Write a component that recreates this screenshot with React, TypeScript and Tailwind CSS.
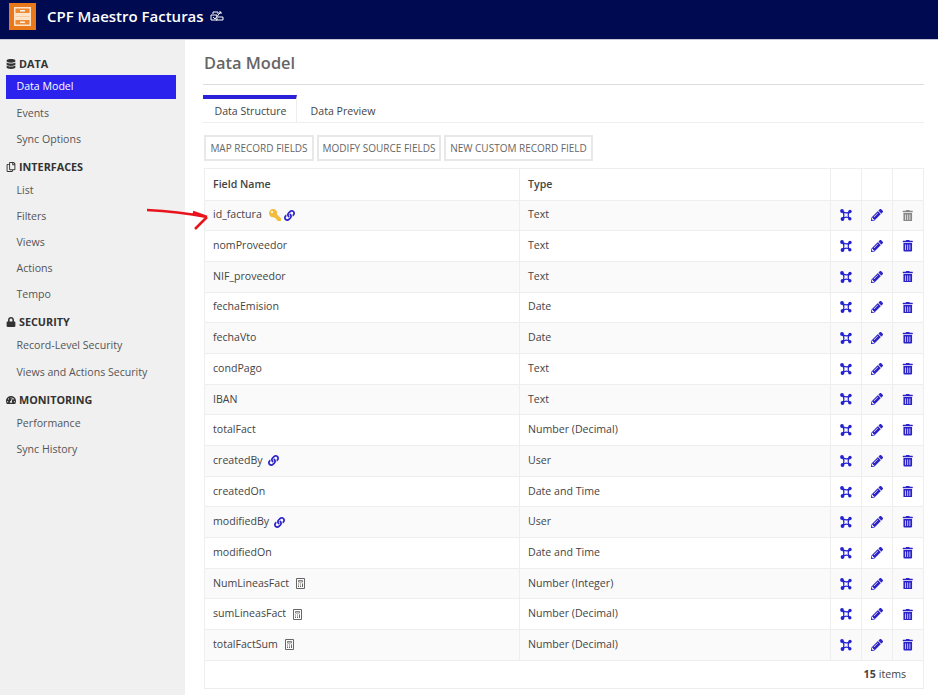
import { FaDatabase, FaKey, FaLink, FaLock, FaPencilAlt, FaRegCopy, FaTachometerAlt, FaTrashAlt } from 'react-icons/fa';

interface Campo {
  nombre: string;
  tipo: string;
  extra?: 'key' | 'link' | 'calc';
}

const campos: Campo[] = [
  { nombre: 'id_factura', tipo: 'Text', extra: 'key' },
  { nombre: 'nomProveedor', tipo: 'Text' },
  { nombre: 'NIF_proveedor', tipo: 'Text' },
  { nombre: 'fechaEmision', tipo: 'Date' },
  { nombre: 'fechaVto', tipo: 'Date' },
  { nombre: 'condPago', tipo: 'Text' },
  { nombre: 'IBAN', tipo: 'Text' },
  { nombre: 'totalFact', tipo: 'Number (Decimal)' },
  { nombre: 'createdBy', tipo: 'User', extra: 'link' },
  { nombre: 'createdOn', tipo: 'Date and Time' },
  { nombre: 'modifiedBy', tipo: 'User', extra: 'link' },
  { nombre: 'modifiedOn', tipo: 'Date and Time' },
  { nombre: 'NumLineasFact', tipo: 'Number (Integer)', extra: 'calc' },
  { nombre: 'sumLineasFact', tipo: 'Number (Decimal)', extra: 'calc' },
  { nombre: 'totalFactSum', tipo: 'Number (Decimal)', extra: 'calc' },
];

function NetworkIcon() {
  return (
    <svg width="12" height="12" viewBox="0 0 12 12" className="text-[#2322d0]">
      <path d="M2 2Q6 5.500 10 2.500Q6.500 6 9.800 9.800Q6 6.500 2.500 10Q5.500 6 2 2Z" stroke="currentColor" strokeWidth="1.200" fill="none" />
      <circle cx="2" cy="2" r="1.900" fill="currentColor" />
      <circle cx="10" cy="2.500" r="1.700" fill="currentColor" />
      <circle cx="2.500" cy="10" r="1.900" fill="currentColor" />
      <circle cx="9.800" cy="9.800" r="1.700" fill="currentColor" />
    </svg>
  );
}

function CalcIcon() {
  return (
    <svg width="9" height="11" viewBox="0 0 9 11" className="text-[#666]">
      <path d="M0.500 0.500H8.500V10.500H0.500Z" stroke="currentColor" fill="none" />
      <path d="M2.500 2.500H6.500V4H2.500Z" stroke="currentColor" strokeWidth="0.800" fill="none" />
      <path d="M2 5.500H3V6.500H2ZM4 5.500H5V6.500H4ZM6 5.500H7V9H6ZM2 7.500H3V9H2ZM4 7.500H5V9H4Z" fill="currentColor" />
    </svg>
  );
}

function SidebarTitle({ icon, children }: { icon: React.ReactNode; children: React.ReactNode }) {
  return (
    <div className="flex items-center gap-[3px] pl-[6px] text-[10.8px] font-bold leading-[16px] text-[#333]">
      <span className="flex w-[10px] justify-center text-[10px]">{icon}</span>
      {children}
    </div>
  );
}

function SidebarItem({ children, active, className }: { children: React.ReactNode; active?: boolean; className?: string }) {
  return (
    <div
      className={
        (active ? 'bg-[#2b22ee] text-white ' : 'text-[#555] ') +
        'mx-[6px] flex h-[24px] w-[170px] items-center pl-[10.5px] text-[10.6px] ' +
        (className || '')
      }
    >
      {children}
    </div>
  );
}

function ActionButton({ children, className }: { children: React.ReactNode; className: string }) {
  return <button className={'h-[26px] border-2 border-[#e8e8e8] text-[10px] font-medium text-[#666] ' + className}>{children}</button>;
}

export default function App() {
  return (
    <div className="flex h-[695px] flex-col overflow-hidden bg-white font-['Open_Sans',sans-serif]">
      <header className="flex h-[40px] shrink-0 items-start border-b border-[#c8c8d8] bg-[#000a50] pl-[9px] pt-[3px]">
        <svg width="27" height="27" viewBox="0 0 27 27" className="shrink-0">
          <rect width="27" height="27" fill="#e8781a" />
          <rect x="5" y="4" width="17" height="19" fill="#fde3c8" />
          <rect x="6.500" y="5.500" width="14" height="4.500" fill="#ee8a34" />
          <rect x="6.500" y="17" width="14" height="4.500" fill="#ee8a34" />
          <path d="M11 7.700H16M11 19.200H16" stroke="#fff3e6" strokeWidth="1.500" />
          <path d="M6.500 13.500H20.500" stroke="#f9c89c" strokeWidth="1" />
        </svg>
        <span className="ml-[11px] text-[15px] font-semibold leading-[27px] text-white">CPF Maestro Facturas</span>
        <svg width="14" height="10" viewBox="0 0 14 10" className="ml-[6px] mt-[8px] text-white">
          <path d="M3 3V1H8V3M1 4H7V9H1ZM8 6H13V9H6" stroke="currentColor" fill="none" />
          <path d="M3 6L5 8L9 3L11 1M11 1H9M11 1V3" stroke="currentColor" fill="none" />
        </svg>
      </header>
      <div className="flex min-h-0 flex-1">
        <aside className="w-[185px] shrink-0 bg-[#f0f0f0] pt-[16px]">
          <SidebarTitle icon={<FaDatabase />}>DATA</SidebarTitle>
          <SidebarItem active className="mt-[3px]">Data Model</SidebarItem>
          <SidebarItem className="mt-[3px]">Events</SidebarItem>
          <SidebarItem className="mt-[2px]">Sync Options</SidebarItem>
          <div className="mt-[7px]">
            <SidebarTitle icon={<FaRegCopy />}>INTERFACES</SidebarTitle>
          </div>
          <div className="mt-[4px] flex flex-col gap-[2px]">
            <SidebarItem>List</SidebarItem>
            <SidebarItem>Filters</SidebarItem>
            <SidebarItem>Views</SidebarItem>
            <SidebarItem>Actions</SidebarItem>
            <SidebarItem>Tempo</SidebarItem>
          </div>
          <div className="mt-[7px]">
            <SidebarTitle icon={<FaLock />}>SECURITY</SidebarTitle>
          </div>
          <div className="mt-[4px] flex flex-col gap-[3px]">
            <SidebarItem>Record-Level Security</SidebarItem>
            <SidebarItem>Views and Actions Security</SidebarItem>
          </div>
          <div className="mt-[7px]">
            <SidebarTitle icon={<FaTachometerAlt />}>MONITORING</SidebarTitle>
          </div>
          <div className="mt-[4px] flex flex-col gap-[2px]">
            <SidebarItem>Performance</SidebarItem>
            <SidebarItem>Sync History</SidebarItem>
          </div>
        </aside>
        <main className="relative min-w-0 flex-1 pl-[18px] pr-[14px]">
          <svg width="66" height="26" viewBox="0 0 66 26" className="absolute left-[-39px] top-[167px]">
            <path d="M1 3C19 4 39 6 61 10M61 10L49 22M61 10L47 5" stroke="#e8141c" strokeWidth="2.500" fill="none" />
          </svg>
          <h1 className="mt-[12px] pl-[1px] text-[16.4px] font-semibold leading-[22px] text-[#666]">Data Model</h1>
          <div className="mt-[10px] border-t border-[#ddd]" />
          <div className="mt-[10px] flex h-[28px] border-b border-[#eee] text-[10.6px] text-[#444]">
            <div className="flex w-[94px] items-center justify-center border-t-[4px] border-r border-[#2b22d8] border-r-[#eee] pl-[2px] pt-[2px]">Data Structure</div>
            <div className="flex w-[92px] items-center justify-center pt-[6px]">Data Preview</div>
          </div>
          <div className="ml-[1px] mt-[12px] flex gap-[3px]">
            <ActionButton className="w-[110px]">MAP RECORD FIELDS</ActionButton>
            <ActionButton className="w-[124px]">MODIFY SOURCE FIELDS</ActionButton>
            <ActionButton className="w-[149px]">NEW CUSTOM RECORD FIELD</ActionButton>
          </div>
          <div className="ml-[1px] mt-[7px] w-[720px] border border-[#eee] text-[10.6px] text-[#444]">
            <div className="flex h-[30.5px] items-center font-semibold">
              <div className="flex h-full w-[315px] items-center border-r border-[#eee] pl-[8px] pt-[2px]">Field Name</div>
              <div className="flex h-full w-[311px] items-center border-r border-[#eee] pl-[8px] pt-[2px]">Type</div>
              <div className="h-full w-[31px] border-r border-[#eee]" />
              <div className="h-full w-[31px] border-r border-[#eee]" />
              <div className="h-full flex-1" />
            </div>
            {campos.map((campo, i) => (
              <div key={campo.nombre} className={'flex h-[30.7px] items-center border-t border-[#eee] ' + (i % 2 === 0 ? 'bg-[#fafafa]' : 'bg-white')}>
                <div className="flex h-full w-[315px] items-center border-r border-[#eee] pl-[8px]">
                  {campo.nombre}
                  {campo.extra === 'key' && (
                    <>
                      <FaKey className="ml-[7px] -scale-x-100 text-[12px] text-[#f2bd3a]" />
                      <FaLink className="ml-[3px] text-[11px] text-[#2b22c8]" />
                    </>
                  )}
                  {campo.extra === 'link' && <FaLink className="ml-[5px] text-[11px] text-[#2b22c8]" />}
                  {campo.extra === 'calc' && (
                    <span className="ml-[7px] flex">
                      <CalcIcon />
                    </span>
                  )}
                </div>
                <div className="flex h-full w-[311px] items-center border-r border-[#eee] pl-[8px]">{campo.tipo}</div>
                <div className="flex h-full w-[31px] items-center justify-center border-r border-[#eee]">
                  <NetworkIcon />
                </div>
                <div className="flex h-full w-[31px] items-center justify-center border-r border-[#eee]">
                  <FaPencilAlt className="text-[12px] text-[#2b22c8]" />
                </div>
                <div className="flex h-full flex-1 items-center justify-center">
                  <FaTrashAlt className={'text-[11.5px] ' + (i === 0 ? 'text-[#888]' : 'text-[#2b22c8]')} />
                </div>
              </div>
            ))}
            <div className="flex h-[28.5px] items-center justify-end border-t border-[#eee] pr-[17px]">
              <span className="font-bold">15</span>
              <span className="ml-[3px]">items</span>
            </div>
          </div>
        </main>
      </div>
    </div>
  );
}
